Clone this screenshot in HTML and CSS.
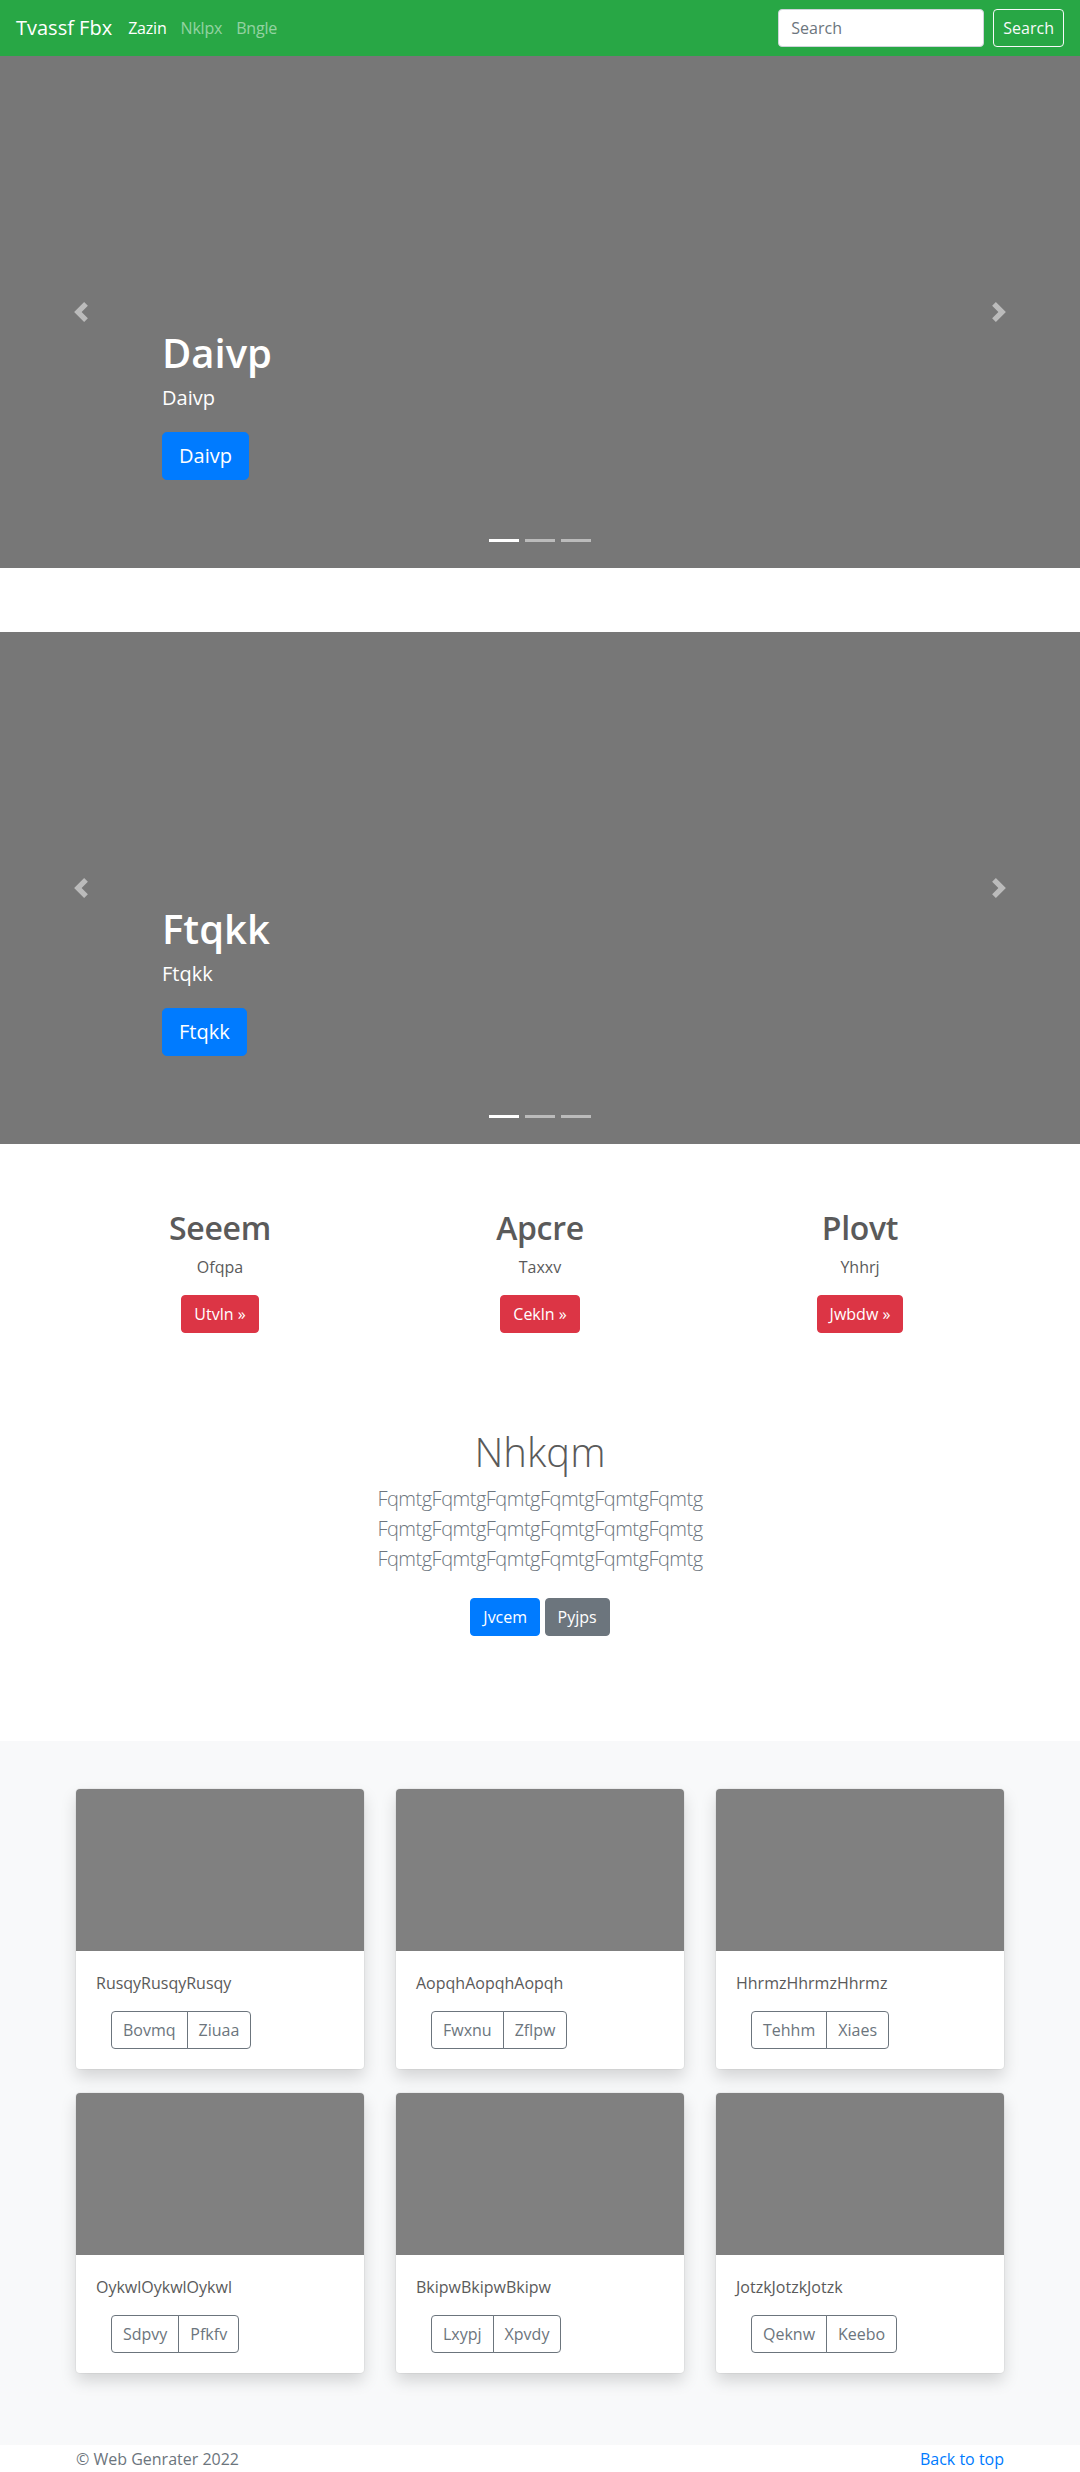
FILE: index.html
```html
<!DOCTYPE html>
<html lang="en">
<head>
<meta charset="utf-8">
<title>Tvassf Fbx</title>
<link rel="stylesheet" href="styles.css">
</head>
<body>
<nav class="navbar">
  <a class="brand" href="#">Tvassf Fbx</a>
  <ul class="nav">
    <li><a class="nav-link active" href="#">Zazin</a></li>
    <li><a class="nav-link" href="#">Nklpx</a></li>
    <li><a class="nav-link" href="#">Bngle</a></li>
  </ul>
  <form class="search">
    <input class="search-input" type="text" placeholder="Search">
    <button class="search-btn" type="button">Search</button>
  </form>
</nav>

<div class="carousel">
  <div class="slide">
    <div class="caption">
      <h1 class="caption-title">Daivp</h1>
      <p class="caption-text">Daivp</p>
      <a class="btn btn-lg btn-primary" href="#">Daivp</a>
    </div>
  </div>
  <a class="ctrl ctrl-prev" href="#"><svg viewBox="0 0 8 8" width="20" height="20"><path d="M5.25 0l-4 4 4 4 1.5-1.5L4.25 4l2.5-2.5L5.25 0z"/></svg></a>
  <a class="ctrl ctrl-next" href="#"><svg viewBox="0 0 8 8" width="20" height="20"><path d="M2.75 0l-1.5 1.5L3.75 4l-2.5 2.5L2.75 8l4-4-4-4z"/></svg></a>
  <ol class="indicators"><li class="active"></li><li></li><li></li></ol>
</div>

<div class="carousel carousel-second">
  <div class="slide">
    <div class="caption">
      <h1 class="caption-title">Ftqkk</h1>
      <p class="caption-text">Ftqkk</p>
      <a class="btn btn-lg btn-primary" href="#">Ftqkk</a>
    </div>
  </div>
  <a class="ctrl ctrl-prev" href="#"><svg viewBox="0 0 8 8" width="20" height="20"><path d="M5.25 0l-4 4 4 4 1.5-1.5L4.25 4l2.5-2.5L5.25 0z"/></svg></a>
  <a class="ctrl ctrl-next" href="#"><svg viewBox="0 0 8 8" width="20" height="20"><path d="M2.75 0l-1.5 1.5L3.75 4l-2.5 2.5L2.75 8l4-4-4-4z"/></svg></a>
  <ol class="indicators"><li class="active"></li><li></li><li></li></ol>
</div>

<div class="marketing">
  <div class="feature">
    <h2 class="feature-title">Seeem</h2>
    <p class="feature-text">Ofqpa</p>
    <a class="btn btn-danger" href="#">Utvln &raquo;</a>
  </div>
  <div class="feature">
    <h2 class="feature-title">Apcre</h2>
    <p class="feature-text">Taxxv</p>
    <a class="btn btn-danger" href="#">Cekln &raquo;</a>
  </div>
  <div class="feature">
    <h2 class="feature-title">Plovt</h2>
    <p class="feature-text">Yhhrj</p>
    <a class="btn btn-danger" href="#">Jwbdw &raquo;</a>
  </div>
</div>

<section class="jumbo">
  <h1 class="jumbo-title">Nhkqm</h1>
  <p class="lead">FqmtgFqmtgFqmtgFqmtgFqmtgFqmtg FqmtgFqmtgFqmtgFqmtgFqmtgFqmtg FqmtgFqmtgFqmtgFqmtgFqmtgFqmtg</p>
  <div class="jumbo-actions">
    <a class="btn btn-primary" href="#">Jvcem</a>
    <a class="btn btn-secondary" href="#">Pyjps</a>
  </div>
</section>

<section class="album">
  <div class="album-grid">
    <div class="card">
      <div class="card-img"></div>
      <div class="card-body">
        <p class="card-text">RusqyRusqyRusqy</p>
        <div class="btn-group"><a class="btn btn-outline" href="#">Bovmq</a><a class="btn btn-outline" href="#">Ziuaa</a></div>
      </div>
    </div>
    <div class="card">
      <div class="card-img"></div>
      <div class="card-body">
        <p class="card-text">AopqhAopqhAopqh</p>
        <div class="btn-group"><a class="btn btn-outline" href="#">Fwxnu</a><a class="btn btn-outline" href="#">Zflpw</a></div>
      </div>
    </div>
    <div class="card">
      <div class="card-img"></div>
      <div class="card-body">
        <p class="card-text">HhrmzHhrmzHhrmz</p>
        <div class="btn-group"><a class="btn btn-outline" href="#">Tehhm</a><a class="btn btn-outline" href="#">Xiaes</a></div>
      </div>
    </div>
    <div class="card">
      <div class="card-img"></div>
      <div class="card-body">
        <p class="card-text">OykwlOykwlOykwl</p>
        <div class="btn-group"><a class="btn btn-outline" href="#">Sdpvy</a><a class="btn btn-outline" href="#">Pfkfv</a></div>
      </div>
    </div>
    <div class="card">
      <div class="card-img"></div>
      <div class="card-body">
        <p class="card-text">BkipwBkipwBkipw</p>
        <div class="btn-group"><a class="btn btn-outline" href="#">Lxypj</a><a class="btn btn-outline" href="#">Xpvdy</a></div>
      </div>
    </div>
    <div class="card">
      <div class="card-img"></div>
      <div class="card-body">
        <p class="card-text">JotzkJotzkJotzk</p>
        <div class="btn-group"><a class="btn btn-outline" href="#">Qeknw</a><a class="btn btn-outline" href="#">Keebo</a></div>
      </div>
    </div>
  </div>
</section>

<footer class="footer">
  <p class="footer-copy">&copy; Web Genrater 2022</p>
  <a class="footer-link" href="#">Back to top</a>
</footer>
</body>
</html>
```

FILE: styles.css
```css
* { box-sizing: border-box; }

html, body {
  margin: 0;
  padding: 0;
}

body {
  font-family: "Open Sans", "Noto Sans", "Liberation Sans", sans-serif;
  font-size: 16px;
  line-height: 1.5;
  color: #5a5a5a;
  background: #fff;
}

a { text-decoration: none; }

/* Navbar */
.navbar {
  height: 56px;
  background: #28a745;
  display: flex;
  align-items: center;
  padding: 8px 16px;
}

.brand {
  color: #fff;
  font-size: 20px;
  line-height: 30px;
  padding: 5px 0;
  margin-right: 9px;
  white-space: nowrap;
}

.nav {
  list-style: none;
  margin: 0;
  padding: 0;
  display: flex;
  flex: 1;
}

.nav-link {
  display: block;
  padding: 8px 7px;
  color: rgba(255, 255, 255, 0.5);
  font-size: 16px;
  line-height: 24px;
  letter-spacing: -0.2px;
}

.nav-link.active { color: #fff; }

.search {
  display: flex;
  align-items: center;
  margin: 0;
}

.search-input {
  width: 206px;
  height: 38px;
  padding: 6px 12px;
  font-family: inherit;
  font-size: 16px;
  color: #495057;
  background: #fff;
  border: 1px solid #ced4da;
  border-radius: 4px;
  outline: none;
}

.search-input::placeholder { color: #6c757d; }

.search-btn {
  margin-left: 9px;
  height: 38px;
  padding: 6px 9px;
  font-family: inherit;
  font-size: 16px;
  line-height: 24px;
  color: #f8f9fa;
  background: transparent;
  border: 1px solid #f8f9fa;
  border-radius: 4px;
}

/* Carousel */
.carousel {
  position: relative;
  height: 512px;
  background: #777;
}

.carousel-second { margin-top: 64px; }

.slide {
  height: 100%;
  display: flex;
  align-items: flex-end;
  padding: 0 162px 88px;
}

.caption {
  display: flex;
  flex-direction: column;
  align-items: flex-start;
  color: #fff;
}

.caption-title {
  margin: 0 0 6px;
  font-size: 40px;
  font-weight: 600;
  line-height: 1.2;
}

.caption-text {
  margin: 0 0 19px;
  font-size: 20px;
  line-height: 30px;
}

.ctrl {
  position: absolute;
  top: 0;
  bottom: 0;
  width: 162px;
  display: flex;
  align-items: center;
  justify-content: center;
  opacity: 0.5;
}

.ctrl svg { fill: #fff; display: block; }
.ctrl-prev { left: 0; }
.ctrl-next { right: 0; }

.indicators {
  position: absolute;
  left: 0;
  right: 0;
  bottom: 26px;
  margin: 0;
  padding: 0;
  list-style: none;
  display: flex;
  justify-content: center;
}

.indicators li {
  width: 30px;
  height: 3px;
  margin: 0 3px;
  background: #fff;
  opacity: 0.5;
}

.indicators li.active { opacity: 1; }

/* Buttons */
.btn {
  display: inline-block;
  padding: 6px 12px;
  font-size: 16px;
  line-height: 24px;
  border: 1px solid transparent;
  border-radius: 4px;
  text-align: center;
  white-space: nowrap;
}

.btn-lg {
  padding: 8px 16px;
  font-size: 20px;
  line-height: 30px;
  border-radius: 4.8px;
}

.btn-primary { background: #007bff; border-color: #007bff; color: #fff; }
.btn-secondary { background: #6c757d; border-color: #6c757d; color: #fff; }
.btn-danger { background: #dc3545; border-color: #dc3545; color: #fff; }
.btn-outline { background: transparent; border-color: #6c757d; color: #6c757d; }

/* Marketing */
.marketing {
  width: 960px;
  margin: 65px auto 0;
  display: grid;
  grid-template-columns: repeat(3, 1fr);
  text-align: center;
}

.feature-title {
  margin: 0 0 8px;
  font-size: 32px;
  font-weight: 600;
  line-height: 1.2;
  letter-spacing: -0.3px;
}

.feature-text {
  margin: 0 0 16px;
}

/* Jumbotron */
.jumbo {
  padding: 95px 0 105px;
  text-align: center;
}

.jumbo-title {
  margin: 0 0 8px;
  font-size: 40px;
  font-weight: 300;
  line-height: 1.2;
}

.lead {
  width: 450px;
  margin: 0 auto;
  font-size: 20px;
  font-weight: 300;
  line-height: 30px;
  letter-spacing: -0.5px;
  color: #6c757d;
}

.jumbo-actions {
  margin-top: 24px;
  display: flex;
  justify-content: center;
  gap: 4.5px;
}

/* Album */
.album {
  background: #f8f9fa;
  padding: 48px 0 72px;
}

.album-grid {
  width: 928px;
  margin: 0 auto;
  display: grid;
  grid-template-columns: repeat(3, 1fr);
  column-gap: 32px;
  row-gap: 24px;
}

.card {
  background: #fff;
  border-radius: 4px;
  box-shadow: 0 8px 16px rgba(0, 0, 0, 0.15), 0 0 0 1px rgba(0, 0, 0, 0.04);
  overflow: hidden;
}

.card-img {
  height: 162px;
  background: #808080;
}

.card-body {
  padding: 20px;
}

.card-text {
  margin: 0 0 16px;
}

.btn-group {
  display: flex;
  margin-left: 15px;
}

.btn-group .btn {
  padding: 6px 11px;
}

.btn-group .btn:first-child {
  border-top-right-radius: 0;
  border-bottom-right-radius: 0;
}

.btn-group .btn:last-child {
  margin-left: -1px;
  border-top-left-radius: 0;
  border-bottom-left-radius: 0;
}

/* Footer */
.footer {
  width: 928px;
  margin: 0 auto;
  padding-top: 2px;
  display: flex;
  justify-content: space-between;
  line-height: 24px;
}

.footer-copy {
  margin: 0;
  color: #6c757d;
}

.footer-link { color: #007bff; }
```
